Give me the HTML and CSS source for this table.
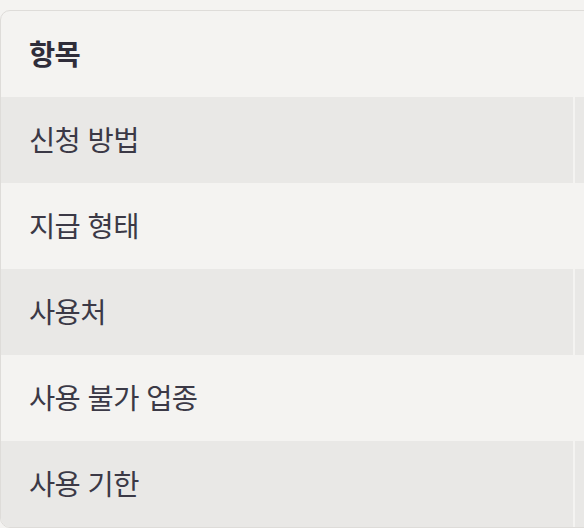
FILE: index.html
```html
<!DOCTYPE html>
<html lang="ko">
<head>
<meta charset="utf-8">
<link rel="stylesheet" href="styles.css">
</head>
<body>
<div class="viewport">
  <div class="table-wrap">
    <table class="table">
      <thead>
        <tr><th class="cell">항목</th><th class="cell next"></th></tr>
      </thead>
      <tbody>
        <tr class="odd"><td class="cell">신청 방법</td><td class="cell next"></td></tr>
        <tr><td class="cell">지급 형태</td><td class="cell next"></td></tr>
        <tr class="odd"><td class="cell">사용처</td><td class="cell next"></td></tr>
        <tr><td class="cell">사용 불가 업종</td><td class="cell next"></td></tr>
        <tr class="odd"><td class="cell">사용 기한</td><td class="cell next"></td></tr>
      </tbody>
    </table>
  </div>
</div>
</body>
</html>
```

FILE: styles.css
```css
html, body {
  margin: 0;
  padding: 0;
  background: #f4f3f1;
}
body {
  font-family: "Noto Sans CJK KR", "Noto Sans", sans-serif;
  color: #3b3946;
}
.viewport {
  width: 584px;
  height: 528px;
  overflow: hidden;
  padding-top: 10px;
  box-sizing: border-box;
}
.table-wrap {
  width: 900px;
  border: 1px solid #dedcd9;
  border-radius: 10px;
  overflow: hidden;
  background: #f4f3f1;
}
.table {
  border-collapse: collapse;
  width: 100%;
}
.cell {
  height: 86px;
  padding: 0 0 2px 28px;
  box-sizing: border-box;
  text-align: left;
  vertical-align: middle;
  font-size: 28.5px;
  font-weight: 400;
  letter-spacing: -0.6px;
  line-height: 1;
  width: 573px;
  border-right: 2px solid #f4f3f1;
}
th.cell {
  font-weight: 700;
  color: #2f2d3a;
}
.cell.next {
  width: auto;
  border-right: none;
}
.odd {
  background: #e9e8e6;
}
```
